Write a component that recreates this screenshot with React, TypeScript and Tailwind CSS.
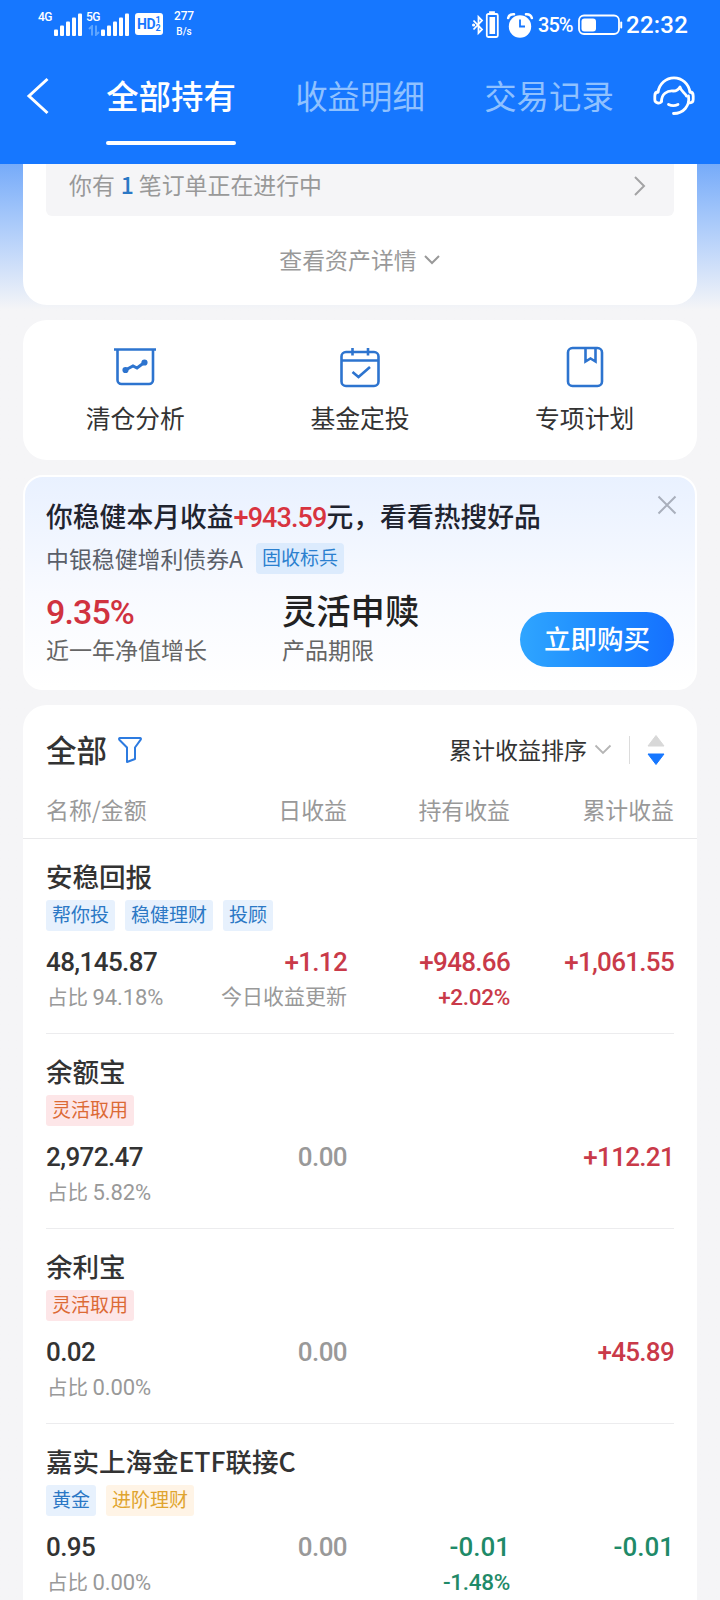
import React from "react";
import clsx from "clsx";

type Tone = "up" | "down" | "flat";

type TagColor = "blue" | "red" | "yellow";

interface Value {
  text: string;
  tone: Tone;
  note?: string;
}

interface Holding {
  name: string;
  tags: { label: string; color: TagColor }[];
  amount: string;
  ratio: string;
  daily: Value;
  held?: Value;
  total: Value;
}

const TONE_CLASS: Record<Tone, string> = {
  up: "text-[#c93a49] tracking-[-0.7px]",
  down: "text-[#1f8a68] tracking-[0px]",
  flat: "text-[#999999] tracking-[-0.6px]",
};

const TAG_CLASS: Record<TagColor, string> = {
  blue: "bg-[#e7f1fd] text-[#2b78c5]",
  red: "bg-[#fde6e8] text-[#dc6a35]",
  yellow: "bg-[#fff4e6] text-[#dfa42f]",
};

const TABS = ["全部持有", "收益明细", "交易记录"];

const HOLDINGS: Holding[] = [
  {
    name: "安稳回报",
    tags: [
      { label: "帮你投", color: "blue" },
      { label: "稳健理财", color: "blue" },
      { label: "投顾", color: "blue" },
    ],
    amount: "48,145.87",
    ratio: "94.18%",
    daily: { text: "+1.12", tone: "up", note: "今日收益更新" },
    held: { text: "+948.66", tone: "up", note: "+2.02%" },
    total: { text: "+1,061.55", tone: "up" },
  },
  {
    name: "余额宝",
    tags: [{ label: "灵活取用", color: "red" }],
    amount: "2,972.47",
    ratio: "5.82%",
    daily: { text: "0.00", tone: "flat" },
    total: { text: "+112.21", tone: "up" },
  },
  {
    name: "余利宝",
    tags: [{ label: "灵活取用", color: "red" }],
    amount: "0.02",
    ratio: "0.00%",
    daily: { text: "0.00", tone: "flat" },
    total: { text: "+45.89", tone: "up" },
  },
  {
    name: "嘉实上海金ETF联接C",
    tags: [
      { label: "黄金", color: "blue" },
      { label: "进阶理财", color: "yellow" },
    ],
    amount: "0.95",
    ratio: "0.00%",
    daily: { text: "0.00", tone: "flat" },
    held: { text: "-0.01", tone: "down", note: "-1.48%" },
    total: { text: "-0.01", tone: "down" },
  },
];

function SignalBars() {
  return (
    <svg width="28" height="24" viewBox="0 0 28 24" fill="#fff">
      <rect x="0" y="16.5" width="4" height="6.5" rx="1" />
      <rect x="6" y="12.5" width="4" height="10.5" rx="1" />
      <rect x="12" y="8.5" width="4" height="14.5" rx="1" />
      <rect x="18" y="4.5" width="4" height="18.5" rx="1" />
      <rect x="24" y="0.5" width="4" height="22.5" rx="1" />
    </svg>
  );
}

function StatusBar() {
  return (
    <div className="flex h-[48px] items-start pt-[10px] pr-[32px] pl-[38px] font-['Roboto',sans-serif] text-white">
      <span className="w-[16px] pt-[2px] text-[12px] leading-[11px] font-medium tracking-[-0.5px]">
        4G
      </span>
      <div className="pt-[3px]">
        <SignalBars />
      </div>
      <div className="ml-[4px] flex w-[16px] flex-col pt-[2px]">
        <span className="text-[12px] leading-[11px] font-medium tracking-[-0.5px]">
          5G
        </span>
        <svg
          className="mt-[2px] ml-[2px]"
          width="12"
          height="11"
          viewBox="0 0 12 11"
          fill="none"
          stroke="#5ea5ff"
          strokeWidth="2"
        >
          <path d="M1 4 4 1.2V10.5M8 .5v9.3L11 7" />
        </svg>
      </div>
      <div className="-ml-px pt-[3px]">
        <SignalBars />
      </div>
      <div className="mt-[3px] ml-[6px] flex h-[22px] w-[28px] items-center rounded-[3px] bg-white pl-[2px] text-[#1677ff]">
        <span className="text-[14px] leading-[22px] font-bold tracking-[-0.3px]">
          HD
        </span>
        <span className="flex flex-col text-[9px] leading-[8px] font-bold">
          <span>1</span>
          <span>2</span>
        </span>
      </div>
      <div className="ml-[9px] flex w-[24px] flex-col items-center font-medium">
        <span className="text-[12px] leading-[12px] tracking-[-0.1px]">
          277
        </span>
        <span className="mt-[5px] text-[10px] leading-[9px]">B/s</span>
      </div>
      <div className="ml-auto flex items-center">
        <svg
          width="28"
          height="28"
          viewBox="0 0 28 28"
          fill="none"
          stroke="#fff"
          strokeWidth="1.8"
        >
          <path d="M1.5 9.5 10 18.5 6.5 22V6L10 9.5 1.5 18.5" />
          <circle cx="1.6" cy="14" r="0.7" fill="#fff" />
          <path d="M18 2.5v-1.3h4v1.3" />
          <rect x="14.8" y="3" width="11" height="23" rx="1.5" />
          <rect x="17.5" y="6" width="5.6" height="17" fill="#fff" stroke="none" />
        </svg>
        <svg
          className="ml-[6px]"
          width="28"
          height="28"
          viewBox="0 0 28 28"
          fill="none"
        >
          <circle cx="14" cy="15.5" r="11.2" fill="#fff" />
          <path
            d="M2.2 7C2.8 4.5 5 3 8 3.2M25.8 7C25.2 4.5 23 3 20 3.2"
            stroke="#fff"
            strokeWidth="2.6"
            strokeLinecap="round"
          />
          <path d="M14 8.5V15.5h5" stroke="#1677ff" strokeWidth="1.8" />
        </svg>
        <span className="ml-[4px] w-[36px] pt-px text-[20px] leading-[28px] font-medium tracking-[-1px]">
          35%
        </span>
        <svg
          className="ml-[4px]"
          width="45"
          height="22"
          viewBox="0 0 45 22"
          fill="none"
        >
          <rect
            x="1"
            y="1.5"
            width="40"
            height="18.5"
            rx="5"
            stroke="#fff"
            strokeWidth="1.8"
          />
          <rect x="3.5" y="4.5" width="14.5" height="13" rx="3" fill="#fff" />
          <path d="M43.2 8.5v5" stroke="#fff" strokeWidth="2" strokeLinecap="round" />
        </svg>
        <span className="ml-[3px] pt-px text-[24px] leading-[28px] font-medium tracking-[0.2px]">
          22:32
        </span>
      </div>
    </div>
  );
}

function HeadsetIcon() {
  return (
    <svg
      width="42"
      height="40"
      viewBox="0 0 42 40"
      fill="none"
      stroke="#fff"
      strokeWidth="2.8"
      strokeLinecap="round"
      strokeLinejoin="round"
    >
      <path d="M5 16C6.5 7.5 13 1.8 21 1.8S35.5 7.5 37 16" />
      <path d="M8.5 25.5C7.8 27 6.5 27.2 5 27 3 26.7 1.8 25.5 1.8 23.5V20c0-2.5 1.2-4 3.2-4" />
      <path d="M8.5 25.5C8.5 18 14 14.5 20 15c3 .2 5.5-1.5 7-4 1 4.500 5 6 6.500 9" />
      <path d="M37 16c2.2 0 3.2 1.5 3.2 4v3.5c0 2.5-1.7 3.5-4.700 3.500" />
      <path d="M35.5 20C37 30 30.500 37.500 20.500 37.500" />
      <path d="M15.5 28.5c3 1.5 6.5 1.5 9.5 0" />
    </svg>
  );
}

function Header() {
  return (
    <header className="h-[164px] bg-[#1677ff]">
      <StatusBar />
      <div className="flex h-[97px] items-start pr-[25px] pl-[26px]">
        <svg
          className="mt-[29px]"
          width="24"
          height="38"
          viewBox="0 0 24 38"
          fill="none"
          stroke="#fff"
          strokeWidth="3"
        >
          <path d="M21.5 2 3 19l18.5 17" />
        </svg>
        <nav className="ml-[56px] flex gap-[59px]">
          {TABS.map((tab, i) => (
            <div key={tab} className="flex w-[130px] flex-col items-center">
              <span
                className={clsx(
                  "pt-[23px] text-[32.4px] leading-[48px] whitespace-nowrap",
                  i === 0 ? "font-medium text-white" : "text-[#8fc1ff]",
                )}
              >
                {tab}
              </span>
              {i === 0 && (
                <div className="mt-[22px] h-[4px] w-[130px] rounded-full bg-white" />
              )}
            </div>
          ))}
        </nav>
        <div className="mt-[28px] ml-auto">
          <HeadsetIcon />
        </div>
      </div>
    </header>
  );
}

function OrderCard() {
  return (
    <section className="h-[141px] rounded-b-[24px] bg-white px-[23px]">
      <div className="flex h-[52px] items-start justify-between rounded-b-[6px] bg-[#f5f5f7] pr-[27px] pl-[23px] text-[22.9px] leading-[40px] text-[#999999]">
        <span>
          你有
          <span className="mr-[5px] ml-[6px] font-medium text-[#2b78c5]">
            1
          </span>
          笔订单正在进行中
        </span>
        <svg
          className="mt-[11px]"
          width="14"
          height="22"
          viewBox="0 0 14 22"
          fill="none"
          stroke="#a3a3a5"
          strokeWidth="2"
        >
          <path d="m2 2 9 9-9 9" />
        </svg>
      </div>
      <div className="flex items-center justify-center pt-[26px] text-[22.9px] leading-[34px] text-[#999999]">
        查看资产详情
        <svg
          className="mt-[2px] ml-[6px]"
          width="18"
          height="12"
          viewBox="0 0 18 12"
          fill="none"
          stroke="#999"
          strokeWidth="2"
        >
          <path d="m2 2 7 7 7-7" />
        </svg>
      </div>
    </section>
  );
}

const iconProps = {
  width: 44,
  height: 42,
  viewBox: "0 0 44 42",
  fill: "none",
  stroke: "#2d74cf",
  strokeWidth: 2.6,
};

function ShortcutCard() {
  const shortcuts = [
    {
      label: "清仓分析",
      icon: (
        <svg {...iconProps}>
          <path d="M1 3.500h42" />
          <path d="M4.500 3.500v30.500a4 4 0 0 0 4 4h27.500a4 4 0 0 0 4-4V3.500" />
          <path d="m12.500 24 7.500-4 4 2 8-6" strokeWidth="3" />
          <circle cx="12.5" cy="24" r="1.8" fill="#2d74cf" />
          <circle cx="31.5" cy="16.5" r="1.8" fill="#2d74cf" />
        </svg>
      ),
    },
    {
      label: "基金定投",
      icon: (
        <svg {...iconProps}>
          <rect x="3.5" y="6" width="37" height="34" rx="4.5" />
          <path d="M3.5 14.500h37M14.500 2V9.500M30 2V9.500M14.500 26l6 5L32 21" />
        </svg>
      ),
    },
    {
      label: "专项计划",
      icon: (
        <svg {...iconProps}>
          <rect x="5" y="2" width="34" height="38" rx="4.5" />
          <path d="M22.500 2.500v13l5-3 5 3V2.500" />
        </svg>
      ),
    },
  ];

  return (
    <section className="grid h-[140px] grid-cols-3 rounded-[24px] bg-white">
      {shortcuts.map((s) => (
        <div key={s.label} className="flex flex-col items-center pt-[26px]">
          {s.icon}
          <span className="mt-[11px] text-[24.8px] leading-[36px] text-[#333333]">
            {s.label}
          </span>
        </div>
      ))}
    </section>
  );
}

function PromoCard() {
  return (
    <section className="relative h-[215px] rounded-[20px] border-2 border-white bg-linear-to-b from-[#e9f1ff] via-[#f8faff] via-55% to-white px-[21px]">
      <h2 className="pt-[19px] text-[26.8px] leading-[40px] font-medium whitespace-nowrap text-[#1f2430]">
        你稳健本月收益
        <span className="font-['Roboto',sans-serif] text-[27px] tracking-[-0.9px] text-[#d8343f]">
          +943.59
        </span>
        元，看看热搜好品
      </h2>
      <div className="mt-[3px] flex items-center">
        <span className="text-[22.9px] leading-[34px] text-[#5a5f69]">
          中银稳健增利债券A
        </span>
        <span className="mt-px ml-[13px] h-[31px] rounded-[4px] bg-[#dcebfd] px-[6px] text-[19px] leading-[28px] text-[#2b80cf]">
          固收标兵
        </span>
      </div>
      <div className="flex">
        <div className="w-[236px]">
          <div className="pt-[15px] font-['Roboto',sans-serif] text-[34px] leading-[44px] font-medium tracking-[-0.9px] text-[#d0323f]">
            9.35%
          </div>
          <div className="-mt-px text-[23px] leading-[32px] text-[#666666]">
            近一年净值增长
          </div>
        </div>
        <div className="w-[238px]">
          <div className="pt-[11px] text-[34.3px] leading-[46px] font-medium text-[#222222]">
            灵活申赎
          </div>
          <div className="mt-[1px] text-[23px] leading-[32px] text-[#666666]">
            产品期限
          </div>
        </div>
        <button className="mt-[37px] h-[55px] w-[154px] rounded-full bg-linear-to-r from-[#2fa5ff] to-[#1670ff] pb-[3px] text-[26.5px] leading-[52px] font-medium text-white">
          立即购买
        </button>
      </div>
      <svg
        className="absolute top-[18px] right-[18px]"
        width="20"
        height="20"
        viewBox="0 0 20 20"
        fill="none"
        stroke="#a9afbc"
        strokeWidth="2"
      >
        <path d="m1.5 1.5 17 17M18.5 1.5l-17 17" />
      </svg>
    </section>
  );
}

function ValueCell({ value }: { value?: Value }) {
  if (!value) return <div />;

  const isNumber = value.note?.endsWith("%");

  return (
    <div
      className={clsx("text-right whitespace-nowrap", TONE_CLASS[value.tone])}
    >
      <div className="font-['Roboto',sans-serif] text-[26px] leading-[32px] font-medium">
        {value.text}
      </div>
      {value.note && (
        <div
          className={clsx(
            isNumber
              ? "mt-[3px] font-['Roboto',sans-serif] text-[22.5px] leading-[32px] font-medium tracking-[-0.3px]"
              : "mt-px -ml-10 text-[21px] leading-[32px] tracking-[0px] text-[#999999]",
          )}
        >
          {value.note}
        </div>
      )}
    </div>
  );
}

function HoldingRow({ holding }: { holding: Holding }) {
  return (
    <div className="mx-[23px] h-[195px] border-b border-[#ececee]">
      <div className="pt-[18px] text-[26.6px] leading-[38px] font-medium tracking-[-0.1px] text-[#333333]">
        {holding.name}
      </div>
      <div className="mt-[5px] flex gap-[10px]">
        {holding.tags.map((tag) => (
          <span
            key={tag.label}
            className={clsx(
              "h-[31px] rounded-[3px] px-[6px] text-[19px] leading-[28px]",
              TAG_CLASS[tag.color],
            )}
          >
            {tag.label}
          </span>
        ))}
      </div>
      <div className="mt-[15px] grid grid-cols-[150px_151px_163px_164px]">
        <div className="whitespace-nowrap">
          <div className="font-['Roboto',sans-serif] text-[26px] leading-[32px] font-medium tracking-[-0.6px] text-[#333333]">
            {holding.amount}
          </div>
          <div className="mt-[2px] pl-[1px] text-[20.5px] leading-[32px] text-[#999999]">
            占比{" "}
            <span className="font-['Roboto',sans-serif] text-[22px] tracking-[-0.1px]">
              {holding.ratio}
            </span>
          </div>
        </div>
        <ValueCell value={holding.daily} />
        <ValueCell value={holding.held} />
        <ValueCell value={holding.total} />
      </div>
    </div>
  );
}

function HoldingsCard() {
  return (
    <section className="rounded-t-[24px] bg-white">
      <div className="flex h-[88px] items-center px-[23px]">
        <h2 className="text-[30.5px] leading-[44px] font-medium text-[#333333]">
          全部
        </h2>
        <svg
          className="mt-px ml-[10px]"
          width="26"
          height="28"
          viewBox="0 0 26 28"
          fill="none"
          stroke="#2d7be0"
          strokeWidth="2"
          strokeLinejoin="round"
        >
          <path d="M3 2h20c1 0 1.2 1 .7 1.7L18 11.5V23l-8 3V11.5L2.3 3.7C1.8 3 2 2 3 2Z" />
        </svg>
        <span className="ml-auto text-[23px] leading-[34px] text-[#333333]">
          累计收益排序
        </span>
        <svg
          className="mt-[2px] ml-[7px]"
          width="18"
          height="12"
          viewBox="0 0 18 12"
          fill="none"
          stroke="#b5b5b5"
          strokeWidth="1.8"
        >
          <path d="m1.5 1.5 7.5 7.5 7.5-7.5" />
        </svg>
        <div className="mt-px ml-[17px] h-[28px] w-px bg-[#dcdcdc]" />
        <svg
          className="mt-[2px] mr-[9px] ml-[17px]"
          width="18"
          height="32"
          viewBox="0 0 18 32"
        >
          <path
            d="M9 1.5 17 12H1Z"
            fill="#d8d8d8"
            stroke="#d8d8d8"
            strokeLinejoin="round"
          />
          <path
            d="M9 30.5 17 20H1Z"
            fill="#1677ff"
            stroke="#1677ff"
            strokeLinejoin="round"
          />
        </svg>
      </div>
      <div className="grid h-[46px] grid-cols-[150px_151px_163px_164px] border-b border-[#e9e9eb] px-[23px] pt-px text-[22.9px] leading-[30px] text-[#999999]">
        <span>名称/金额</span>
        <span className="text-right">日收益</span>
        <span className="text-right">持有收益</span>
        <span className="text-right">累计收益</span>
      </div>
      {HOLDINGS.map((holding) => (
        <HoldingRow key={holding.name} holding={holding} />
      ))}
    </section>
  );
}

export default function App() {
  return (
    <div className="h-[1600px] w-[720px] overflow-hidden bg-[#f5f5f7] font-['Noto_Sans_CJK_SC',sans-serif]">
      <Header />
      <main className="flex flex-col gap-[15px] bg-linear-to-b from-[#76abf9] to-[#f5f5f7] to-[146px] px-[23px]">
        <OrderCard />
        <ShortcutCard />
        <PromoCard />
        <HoldingsCard />
      </main>
    </div>
  );
}
